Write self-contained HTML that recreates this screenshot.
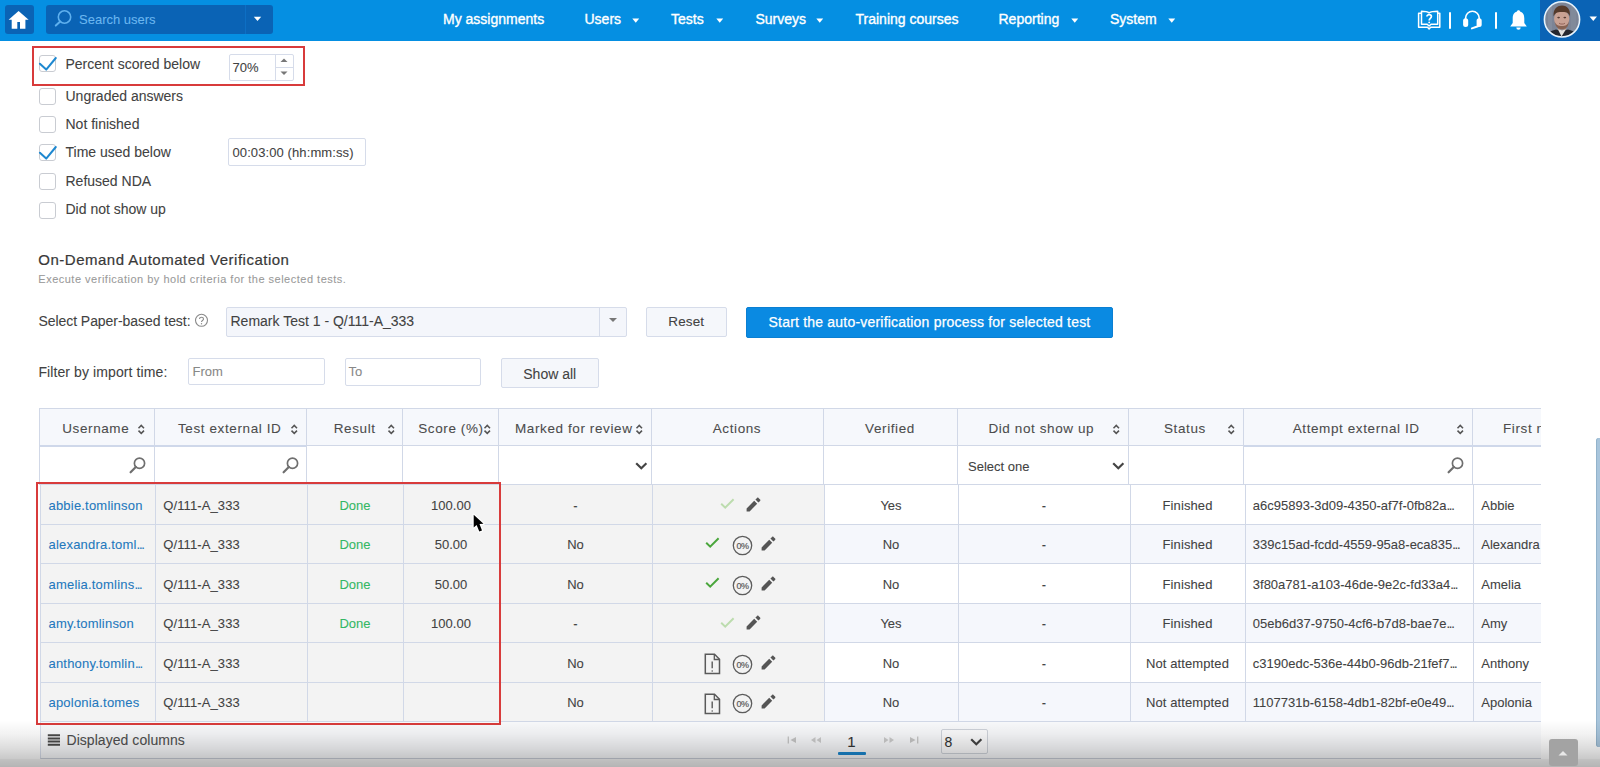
<!DOCTYPE html>
<html><head><meta charset="utf-8"><title>Remark verification</title>
<style>
*{box-sizing:border-box;margin:0;padding:0}
html,body{width:1600px;height:767px;overflow:hidden;background:#fff;font-family:"Liberation Sans",sans-serif;color:#3a3a3a}
.a{position:absolute}
.t{position:absolute;white-space:nowrap;line-height:1;-webkit-text-stroke:0.08px currentColor}
</style></head><body>
<div class="a" style="left:0px;top:0px;width:1600px;height:41px;background:#058fe2;"></div><div class="a" style="left:5px;top:5px;width:29px;height:29px;background:#0a63b5;border-radius:3px;"></div><svg class="a" style="left:5px;top:5px;" width="29" height="29" viewBox="0 0 29 29"><path d="M3.6 14.8 L13.6 5.9 L23.6 14.8 Z" fill="#fff"/><path d="M6.7 14 H20.4 V23.7 H15 V17 H12.3 V23.7 H6.7 Z" fill="#fff"/></svg><div class="a" style="left:46px;top:5px;width:227px;height:29px;background:#0a63b5;border-radius:3px;"></div><div class="a" style="left:245px;top:5px;width:1px;height:29px;background:#0d6fc4;"></div><svg class="a" style="left:52px;top:8px;" width="22" height="22" viewBox="0 0 22 22"><circle cx="12.5" cy="9" r="6.2" fill="none" stroke="#5fb0ee" stroke-width="1.6"/><path d="M8.2 13.5 L3.8 17.6" stroke="#5fb0ee" stroke-width="2" stroke-linecap="round"/></svg><div class="t" style="left:79px;top:13.00px;font-size:13px;color:#6bb7f0;">Search users</div><svg class="a" style="left:253px;top:16px;" width="9" height="6" viewBox="0 0 9 6"><path d="M0.8 0.8 H8.2 L4.5 4.9 Z" fill="#fff"/></svg><div class="t" style="left:443px;top:12.45px;font-size:14px;color:#fff;-webkit-text-stroke:0.35px #fff;">My assignments</div><div class="t" style="left:584.5px;top:12.45px;font-size:14px;color:#fff;-webkit-text-stroke:0.35px #fff;">Users</div><svg class="a" style="left:632px;top:18px;" width="8" height="6" viewBox="0 0 8 6"><path d="M0.3 0.6 H7.2 L3.75 4.8 Z" fill="#fff"/></svg><div class="t" style="left:671px;top:12.45px;font-size:14px;color:#fff;-webkit-text-stroke:0.35px #fff;">Tests</div><svg class="a" style="left:716.2px;top:18px;" width="8" height="6" viewBox="0 0 8 6"><path d="M0.3 0.6 H7.2 L3.75 4.8 Z" fill="#fff"/></svg><div class="t" style="left:755.5px;top:12.45px;font-size:14px;color:#fff;-webkit-text-stroke:0.35px #fff;">Surveys</div><svg class="a" style="left:816.2px;top:18px;" width="8" height="6" viewBox="0 0 8 6"><path d="M0.3 0.6 H7.2 L3.75 4.8 Z" fill="#fff"/></svg><div class="t" style="left:855.5px;top:12.45px;font-size:14px;color:#fff;-webkit-text-stroke:0.35px #fff;">Training courses</div><div class="t" style="left:998.5px;top:12.45px;font-size:14px;color:#fff;-webkit-text-stroke:0.35px #fff;">Reporting</div><svg class="a" style="left:1071.2px;top:18px;" width="8" height="6" viewBox="0 0 8 6"><path d="M0.3 0.6 H7.2 L3.75 4.8 Z" fill="#fff"/></svg><div class="t" style="left:1110px;top:12.45px;font-size:14px;color:#fff;-webkit-text-stroke:0.35px #fff;">System</div><svg class="a" style="left:1168px;top:18px;" width="8" height="6" viewBox="0 0 8 6"><path d="M0.3 0.6 H7.2 L3.75 4.8 Z" fill="#fff"/></svg><svg class="a" style="left:1417px;top:9px;" width="25" height="23" viewBox="0 0 25 23"><g fill="none" stroke="#fff" stroke-width="1.5" stroke-linejoin="round">
<path d="M4.3 4.3 H1.6 V18.3 H10.6 L12.1 20 L13.6 18.3 H22.8 V4.3 H20.7"/>
<path d="M4.5 15.3 V2.2 C7.5 2.2 10.5 2.6 12.1 3.8 C13.7 2.6 16.7 2.2 20.7 2.2 V15.3 H14 L12.1 17 L10.2 15.3 Z"/>
</g>
<path d="M9.9 7.6 C9.9 4.9 14.4 4.9 14.4 7.6 C14.4 9.4 12.2 9.6 12.2 11.5" fill="none" stroke="#fff" stroke-width="1.7"/><circle cx="12.2" cy="13.4" r="0.95" fill="#fff"/></svg><div class="a" style="left:1449px;top:12px;width:2px;height:17px;background:#fff;border-radius:1px;"></div><svg class="a" style="left:1461px;top:9px;" width="22" height="22" viewBox="0 0 22 22"><path d="M4.6 11 V9 A6.8 6.8 0 0 1 18.2 9 V11" fill="none" stroke="#fff" stroke-width="1.6"/>
<rect x="2.1" y="9.2" width="5.1" height="8.8" rx="2.5" fill="#fff"/><rect x="15.6" y="9.2" width="5.1" height="8.8" rx="2.5" fill="#fff"/>
<path d="M10.9 19.4 L17 17.3" fill="none" stroke="#fff" stroke-width="2" stroke-linecap="round"/></svg><div class="a" style="left:1495px;top:12px;width:2px;height:17px;background:#fff;border-radius:1px;"></div><svg class="a" style="left:1509px;top:9px;" width="19" height="22" viewBox="0 0 19 22"><path d="M9.5 1.2 C10.5 1.2 11 1.8 11 2.6 C14.2 3.4 15.3 6.2 15.3 9.5 V14 L17.8 17.6 H1.2 L3.7 14 V9.5 C3.7 6.2 4.8 3.4 8 2.6 C8 1.8 8.5 1.2 9.5 1.2 Z" fill="#fff"/><path d="M7.3 18.6 A2.2 2.2 0 0 0 11.7 18.6 Z" fill="#fff"/></svg><div class="a" style="left:1540px;top:0px;width:60px;height:41px;background:#0a63b5;"></div><svg class="a" style="left:1543px;top:0px;" width="39" height="39" viewBox="0 0 39 39"><defs><clipPath id="av"><circle cx="19" cy="19.4" r="17.3"/></clipPath></defs>
<g clip-path="url(#av)">
<rect x="0" y="0" width="39" height="39" fill="#7c8496"/>
<rect x="5" y="0" width="4" height="39" fill="#8a91a1" opacity="0.6"/><rect x="28" y="0" width="5" height="39" fill="#868d9c" opacity="0.6"/>
<path d="M3 39 C4 33 8 30.5 13 29.5 L19 31 L25 29.5 C30 30.5 34 33 36 39 Z" fill="#25272e"/>
<path d="M14.5 28.5 L18.5 36.5 L23.5 28.5 L19 30.5 Z" fill="#e4e0dc"/>
<rect x="15" y="23" width="8" height="6.5" fill="#a8806e"/>
<ellipse cx="18.7" cy="19" rx="7.6" ry="9" fill="#c9a193"/>
<path d="M10.6 16.5 C10 9.5 13.5 5.6 19 5.5 C24.5 5.6 27.7 9.5 26.8 16.5 C26 13 24 11.8 19 11.9 C14 11.8 11.8 13 10.6 16.5 Z" fill="#553a2b"/>
<path d="M11.5 21 C12.5 27.5 15.5 29 19 29 C22.5 29 25.5 27.5 26 21 C25 25 22.5 26 19 26 C15.5 26 12.5 25 11.5 21Z" fill="#876252"/>
<ellipse cx="15.6" cy="17.6" rx="1.4" ry="0.8" fill="#5a3e35"/><ellipse cx="21.8" cy="17.6" rx="1.4" ry="0.8" fill="#5a3e35"/>
<path d="M16 23.2 C17.5 24.4 20.5 24.4 22 23.2" fill="none" stroke="#8e5f55" stroke-width="0.9"/>
</g>
<circle cx="19" cy="19.4" r="17.6" fill="none" stroke="#e8f3fc" stroke-width="1.6"/></svg><svg class="a" style="left:1589px;top:16px;" width="9" height="6" viewBox="0 0 9 6"><path d="M0.5 0.5 H8 L4.25 4.9 Z" fill="#fff"/></svg><div class="a" style="left:32px;top:46px;width:273px;height:39.5px;border:2px solid #d83b3b;"></div><div class="a" style="left:39px;top:55px;width:17px;height:17px;border:1px solid #c9ccd2;border-radius:3px;background:#fff;"></div><svg class="a" style="left:38px;top:52px;" width="22" height="20" viewBox="0 0 22 20"><path d="M1.9 11.8 L8.2 17.6 L17.8 6" fill="none" stroke="#1e88d0" stroke-width="2" stroke-linecap="round" stroke-linejoin="round"/></svg><div class="t" style="left:65.5px;top:56.65px;font-size:14px;color:#424242;">Percent scored below</div><div class="a" style="left:39px;top:88px;width:17px;height:17px;border:1px solid #c9ccd2;border-radius:3px;background:#fff;"></div><div class="t" style="left:65.5px;top:88.95px;font-size:14px;color:#424242;">Ungraded answers</div><div class="a" style="left:39px;top:116px;width:17px;height:17px;border:1px solid #c9ccd2;border-radius:3px;background:#fff;"></div><div class="t" style="left:65.5px;top:116.75px;font-size:14px;color:#424242;">Not finished</div><div class="a" style="left:39px;top:144px;width:17px;height:17px;border:1px solid #c9ccd2;border-radius:3px;background:#fff;"></div><svg class="a" style="left:38px;top:141px;" width="22" height="20" viewBox="0 0 22 20"><path d="M1.9 11.8 L8.2 17.6 L17.8 6" fill="none" stroke="#1e88d0" stroke-width="2" stroke-linecap="round" stroke-linejoin="round"/></svg><div class="t" style="left:65.5px;top:144.75px;font-size:14px;color:#424242;">Time used below</div><div class="a" style="left:39px;top:173px;width:17px;height:17px;border:1px solid #c9ccd2;border-radius:3px;background:#fff;"></div><div class="t" style="left:65.5px;top:174.25px;font-size:14px;color:#424242;">Refused NDA</div><div class="a" style="left:39px;top:201.5px;width:17px;height:17px;border:1px solid #c9ccd2;border-radius:3px;background:#fff;"></div><div class="t" style="left:65.5px;top:202.05px;font-size:14px;color:#424242;">Did not show up</div><div class="a" style="left:228.5px;top:53.5px;width:65px;height:27.5px;border:1px solid #d6dcea;border-radius:2px;background:#fff;"></div><div class="a" style="left:274.5px;top:54.5px;width:1px;height:25.5px;background:#d6dcea;"></div><div class="a" style="left:275.5px;top:67px;width:17px;height:1px;background:#d6dcea;"></div><svg class="a" style="left:279px;top:57px;" width="10" height="7" viewBox="0 0 10 7"><path d="M1.5 5 L5 1.5 L8.5 5 Z" fill="#777"/></svg><svg class="a" style="left:279px;top:70px;" width="10" height="7" viewBox="0 0 10 7"><path d="M1.5 1.5 L5 5 L8.5 1.5 Z" fill="#777"/></svg><div class="t" style="left:232.5px;top:61.30px;font-size:13px;color:#424242;">70%</div><div class="a" style="left:228px;top:137.5px;width:137.5px;height:28.5px;border:1px solid #d6dcea;border-radius:2px;background:#fff;"></div><div class="t" style="left:232.5px;top:145.60px;font-size:13px;color:#424242;letter-spacing:0.1px;">00:03:00 (hh:mm:ss)</div><div class="t" style="left:38.3px;top:252.05px;font-size:15px;color:#383838;letter-spacing:0.5px;-webkit-text-stroke:0.2px #383838;">On-Demand Automated Verification</div><div class="t" style="left:38.3px;top:274.39px;font-size:11px;color:#9a9a9a;letter-spacing:0.5px;">Execute verification by hold criteria for the selected tests.</div><div class="t" style="left:38.4px;top:313.55px;font-size:14px;color:#424242;letter-spacing:-0.05px;">Select Paper-based test:</div><svg class="a" style="left:194px;top:312.5px;" width="15" height="15" viewBox="0 0 15 15"><circle cx="7.5" cy="7.3" r="6" fill="none" stroke="#8a8a8a" stroke-width="1.1"/><path d="M5.5 5.9 C5.5 3.7 9.5 3.7 9.5 5.9 C9.5 7.4 7.5 7.5 7.5 9" fill="none" stroke="#8a8a8a" stroke-width="1.1"/><circle cx="7.5" cy="10.8" r="0.7" fill="#8a8a8a"/></svg><div class="a" style="left:226px;top:306.5px;width:400.5px;height:30.5px;border:1px solid #d6dcea;border-radius:2px;background:#f4f6fb;"></div><div class="a" style="left:599px;top:307.5px;width:1px;height:28.5px;background:#d6dcea;"></div><svg class="a" style="left:608px;top:317px;" width="10" height="7" viewBox="0 0 10 7"><path d="M1 1 H9 L5 5 Z" fill="#777"/></svg><div class="t" style="left:230.5px;top:313.55px;font-size:14px;color:#424242;">Remark Test 1 - Q/111-A_333</div><div class="a" style="left:646px;top:306.5px;width:80.5px;height:30.5px;border:1px solid #d6dcea;border-radius:2px;background:#f5f7fb;"></div><div class="t" style="left:646px;top:315.07px;font-size:13.5px;color:#424242;letter-spacing:0.1px;width:80.5px;text-align:center;">Reset</div><div class="a" style="left:746px;top:306.5px;width:367px;height:31px;background:#0a8ae2;border-radius:2px;border:1px solid #0a7fd2;"></div><div class="t" style="left:746px;top:315.25px;font-size:14px;color:#fff;letter-spacing:0.2px;width:367px;text-align:center;-webkit-text-stroke:0.25px #fff;">Start the auto-verification process for selected test</div><div class="t" style="left:38.4px;top:364.75px;font-size:14px;color:#424242;letter-spacing:0.1px;">Filter by import time:</div><div class="a" style="left:188px;top:357.8px;width:136.5px;height:27.6px;border:1px solid #d6dcea;border-radius:2px;background:#fff;"></div><div class="t" style="left:192.5px;top:365.20px;font-size:13px;color:#888;">From</div><div class="a" style="left:344.5px;top:357.6px;width:136.7px;height:28.2px;border:1px solid #d6dcea;border-radius:2px;background:#fff;"></div><div class="t" style="left:348.5px;top:365.30px;font-size:13px;color:#888;">To</div><div class="a" style="left:501px;top:357.5px;width:97.5px;height:30.5px;border:1px solid #d6dcea;border-radius:2px;background:#f5f7fb;"></div><div class="t" style="left:501px;top:367.15px;font-size:14px;color:#424242;width:97.5px;text-align:center;">Show all</div><div class="a" style="left:39px;top:408px;width:1502px;height:38px;background:#f6f8fc;border-top:1px solid #d1d8e7;border-bottom:1px solid #d1d8e7;"></div><div class="a" style="left:39px;top:446px;width:1502px;height:39px;background:#fff;"></div><div class="a" style="left:39px;top:408px;width:1px;height:77px;background:#d1d8e7;"></div><div class="a" style="left:154px;top:408px;width:1px;height:77px;background:#d1d8e7;"></div><div class="a" style="left:306px;top:408px;width:1px;height:77px;background:#d1d8e7;"></div><div class="a" style="left:402px;top:408px;width:1px;height:77px;background:#d1d8e7;"></div><div class="a" style="left:498px;top:408px;width:1px;height:77px;background:#d1d8e7;"></div><div class="a" style="left:651px;top:408px;width:1px;height:77px;background:#d1d8e7;"></div><div class="a" style="left:823px;top:408px;width:1px;height:77px;background:#d1d8e7;"></div><div class="a" style="left:957px;top:408px;width:1px;height:77px;background:#d1d8e7;"></div><div class="a" style="left:1128px;top:408px;width:1px;height:77px;background:#d1d8e7;"></div><div class="a" style="left:1243px;top:408px;width:1px;height:77px;background:#d1d8e7;"></div><div class="a" style="left:1472px;top:408px;width:1px;height:77px;background:#d1d8e7;"></div><div class="a" style="left:40px;top:445px;width:266px;height:2px;background:#cfd8ea;"></div><div class="a" style="left:1244px;top:445px;width:297px;height:2px;background:#cfd8ea;"></div><div class="a" style="left:40px;top:484.5px;width:784px;height:39.5px;background:#f3f3f3;"></div><div class="a" style="left:824px;top:484.5px;width:717px;height:39.5px;background:#fff;"></div><div class="a" style="left:40px;top:524px;width:784px;height:39.5px;background:#f3f3f3;"></div><div class="a" style="left:824px;top:524px;width:717px;height:39.5px;background:#f5f7fc;"></div><div class="a" style="left:40px;top:563.5px;width:784px;height:39.5px;background:#f3f3f3;"></div><div class="a" style="left:824px;top:563.5px;width:717px;height:39.5px;background:#fff;"></div><div class="a" style="left:40px;top:603px;width:784px;height:39.5px;background:#f3f3f3;"></div><div class="a" style="left:824px;top:603px;width:717px;height:39.5px;background:#f5f7fc;"></div><div class="a" style="left:40px;top:642.5px;width:784px;height:39.5px;background:#f3f3f3;"></div><div class="a" style="left:824px;top:642.5px;width:717px;height:39.5px;background:#fff;"></div><div class="a" style="left:40px;top:682px;width:784px;height:39.5px;background:#f3f3f3;"></div><div class="a" style="left:824px;top:682px;width:717px;height:39.5px;background:#f5f7fc;"></div><div class="a" style="left:39px;top:484px;width:1502px;height:1px;background:#d1d8e7;"></div><div class="a" style="left:40px;top:524px;width:1501px;height:1px;background:#d1d8e7;"></div><div class="a" style="left:40px;top:563px;width:1501px;height:1px;background:#d1d8e7;"></div><div class="a" style="left:40px;top:603px;width:1501px;height:1px;background:#d1d8e7;"></div><div class="a" style="left:40px;top:642px;width:1501px;height:1px;background:#d1d8e7;"></div><div class="a" style="left:40px;top:682px;width:1501px;height:1px;background:#d1d8e7;"></div><div class="a" style="left:40px;top:721px;width:1501px;height:1px;background:#d1d8e7;"></div><div class="a" style="left:40px;top:485px;width:1px;height:237px;background:#d1d8e7;"></div><div class="a" style="left:155px;top:485px;width:1px;height:237px;background:#d1d8e7;"></div><div class="a" style="left:307px;top:485px;width:1px;height:237px;background:#d1d8e7;"></div><div class="a" style="left:403px;top:485px;width:1px;height:237px;background:#d1d8e7;"></div><div class="a" style="left:499px;top:485px;width:1px;height:237px;background:#d1d8e7;"></div><div class="a" style="left:652px;top:485px;width:1px;height:237px;background:#d1d8e7;"></div><div class="a" style="left:824px;top:485px;width:1px;height:237px;background:#d1d8e7;"></div><div class="a" style="left:958px;top:485px;width:1px;height:237px;background:#d1d8e7;"></div><div class="a" style="left:1130px;top:485px;width:1px;height:237px;background:#d1d8e7;"></div><div class="a" style="left:1245px;top:485px;width:1px;height:237px;background:#d1d8e7;"></div><div class="a" style="left:1473px;top:485px;width:1px;height:237px;background:#d1d8e7;"></div><div class="t" style="left:62.25px;top:422.32px;font-size:13.5px;color:#4c4c4c;letter-spacing:0.6px;">Username</div><svg class="a" style="left:137.3px;top:423.5px;" width="9" height="11" viewBox="0 0 9 11"><path d="M1.5 4.2 L4.25 1.4 L7 4.2 M1.5 6.6 L4.25 9.4 L7 6.6" fill="none" stroke="#555" stroke-width="1.5"/></svg><div class="t" style="left:178px;top:422.32px;font-size:13.5px;color:#4c4c4c;letter-spacing:0.6px;">Test external ID</div><svg class="a" style="left:290.1px;top:423.5px;" width="9" height="11" viewBox="0 0 9 11"><path d="M1.5 4.2 L4.25 1.4 L7 4.2 M1.5 6.6 L4.25 9.4 L7 6.6" fill="none" stroke="#555" stroke-width="1.5"/></svg><div class="t" style="left:333.75px;top:422.32px;font-size:13.5px;color:#4c4c4c;letter-spacing:0.6px;">Result</div><svg class="a" style="left:387.0px;top:423.5px;" width="9" height="11" viewBox="0 0 9 11"><path d="M1.5 4.2 L4.25 1.4 L7 4.2 M1.5 6.6 L4.25 9.4 L7 6.6" fill="none" stroke="#555" stroke-width="1.5"/></svg><div class="t" style="left:418.25px;top:422.32px;font-size:13.5px;color:#4c4c4c;letter-spacing:0.6px;">Score (%)</div><svg class="a" style="left:482.5px;top:423.5px;" width="9" height="11" viewBox="0 0 9 11"><path d="M1.5 4.2 L4.25 1.4 L7 4.2 M1.5 6.6 L4.25 9.4 L7 6.6" fill="none" stroke="#555" stroke-width="1.5"/></svg><div class="t" style="left:515px;top:422.32px;font-size:13.5px;color:#4c4c4c;letter-spacing:0.6px;">Marked for review</div><svg class="a" style="left:635.25px;top:423.5px;" width="9" height="11" viewBox="0 0 9 11"><path d="M1.5 4.2 L4.25 1.4 L7 4.2 M1.5 6.6 L4.25 9.4 L7 6.6" fill="none" stroke="#555" stroke-width="1.5"/></svg><div class="t" style="left:988.4px;top:422.32px;font-size:13.5px;color:#4c4c4c;letter-spacing:0.6px;">Did not show up</div><svg class="a" style="left:1112.0px;top:423.5px;" width="9" height="11" viewBox="0 0 9 11"><path d="M1.5 4.2 L4.25 1.4 L7 4.2 M1.5 6.6 L4.25 9.4 L7 6.6" fill="none" stroke="#555" stroke-width="1.5"/></svg><div class="t" style="left:1164px;top:422.32px;font-size:13.5px;color:#4c4c4c;letter-spacing:0.6px;">Status</div><svg class="a" style="left:1227.3px;top:423.5px;" width="9" height="11" viewBox="0 0 9 11"><path d="M1.5 4.2 L4.25 1.4 L7 4.2 M1.5 6.6 L4.25 9.4 L7 6.6" fill="none" stroke="#555" stroke-width="1.5"/></svg><div class="t" style="left:1292.7px;top:422.32px;font-size:13.5px;color:#4c4c4c;letter-spacing:0.6px;">Attempt external ID</div><svg class="a" style="left:1455.5px;top:423.5px;" width="9" height="11" viewBox="0 0 9 11"><path d="M1.5 4.2 L4.25 1.4 L7 4.2 M1.5 6.6 L4.25 9.4 L7 6.6" fill="none" stroke="#555" stroke-width="1.5"/></svg><div class="t" style="left:651px;top:422.32px;font-size:13.5px;color:#4c4c4c;letter-spacing:0.6px;width:172px;text-align:center;">Actions</div><div class="t" style="left:823px;top:422.32px;font-size:13.5px;color:#4c4c4c;letter-spacing:0.6px;width:134px;text-align:center;">Verified</div><div class="a" style="left:1473px;top:409px;width:68px;height:36px;overflow:hidden"><div class="t" style="left:30px;top:13.32px;font-size:13.5px;color:#4c4c4c;letter-spacing:0.6px;">First name</div></div><svg class="a" style="left:128.5px;top:456.5px;" width="17" height="17" viewBox="0 0 17 17"><circle cx="10.5" cy="6.3" r="5.1" fill="none" stroke="#6f6f6f" stroke-width="1.7"/><path d="M6.8 10 L1.6 15.3" stroke="#6f6f6f" stroke-width="2.2" stroke-linecap="round"/></svg><svg class="a" style="left:281.5px;top:456.5px;" width="17" height="17" viewBox="0 0 17 17"><circle cx="10.5" cy="6.3" r="5.1" fill="none" stroke="#6f6f6f" stroke-width="1.7"/><path d="M6.8 10 L1.6 15.3" stroke="#6f6f6f" stroke-width="2.2" stroke-linecap="round"/></svg><svg class="a" style="left:1447px;top:456.5px;" width="17" height="17" viewBox="0 0 17 17"><circle cx="10.5" cy="6.3" r="5.1" fill="none" stroke="#6f6f6f" stroke-width="1.7"/><path d="M6.8 10 L1.6 15.3" stroke="#6f6f6f" stroke-width="2.2" stroke-linecap="round"/></svg><svg class="a" style="left:634.5px;top:462px;" width="13" height="8" viewBox="0 0 13 8"><path d="M1.2 1.2 L6.3 6.2 L11.4 1.2" fill="none" stroke="#444" stroke-width="2.2"/></svg><svg class="a" style="left:1112px;top:462px;" width="13" height="8" viewBox="0 0 13 8"><path d="M1.2 1.2 L6.3 6.2 L11.4 1.2" fill="none" stroke="#444" stroke-width="2.2"/></svg><div class="t" style="left:968px;top:459.60px;font-size:13px;color:#424242;">Select one</div><div class="t" style="left:48.5px;top:498.50px;font-size:13px;color:#2378bd;letter-spacing:0.2px;">abbie.tomlinson</div><div class="t" style="left:163.3px;top:498.50px;font-size:13px;color:#424242;letter-spacing:0.1px;">Q/111-A_333</div><div class="t" style="left:307px;top:498.50px;font-size:13px;color:#34b763;width:96px;text-align:center;">Done</div><div class="t" style="left:403px;top:498.50px;font-size:13px;color:#424242;width:96px;text-align:center;">100.00</div><div class="t" style="left:499px;top:498.50px;font-size:13px;color:#424242;width:153px;text-align:center;">-</div><svg class="a" style="left:719.5px;top:498.0px;" width="15" height="12" viewBox="0 0 15 12"><path d="M1.2 5.8 L5.2 9.6 L13.6 1.2" fill="none" stroke="#bcdcae" stroke-width="2"/></svg><svg class="a" style="left:745.5px;top:496.8px;" width="15" height="15" viewBox="0 0 15 15"><path d="M0.6 11.4 V14.4 H3.6 L11.2 6.8 L8.2 3.8 Z M12.4 5.6 L14.1 3.9 C14.5 3.5 14.5 2.9 14.1 2.5 L12.5 0.9 C12.1 0.5 11.5 0.5 11.1 0.9 L9.4 2.6 Z" fill="#555" transform="translate(0,0)"/></svg><div class="t" style="left:824px;top:498.50px;font-size:13px;color:#424242;width:134px;text-align:center;">Yes</div><div class="t" style="left:958px;top:498.50px;font-size:13px;color:#424242;width:172px;text-align:center;">-</div><div class="t" style="left:1130px;top:498.50px;font-size:13px;color:#424242;letter-spacing:0.1px;width:115px;text-align:center;">Finished</div><div class="t" style="left:1252.8px;top:498.50px;font-size:13px;color:#424242;">a6c95893-3d09-4350-af7f-0fb82a<span style="letter-spacing:-1.3px">...</span></div><div class="a" style="left:1474px;top:484.5px;width:67px;height:39px;overflow:hidden"><div class="t" style="left:7.3px;top:14.00px;font-size:13px;color:#424242;">Abbie</div></div><div class="t" style="left:48.5px;top:538.00px;font-size:13px;color:#2378bd;letter-spacing:0.2px;">alexandra.toml<span style="letter-spacing:-1.3px">...</span></div><div class="t" style="left:163.3px;top:538.00px;font-size:13px;color:#424242;letter-spacing:0.1px;">Q/111-A_333</div><div class="t" style="left:307px;top:538.00px;font-size:13px;color:#34b763;width:96px;text-align:center;">Done</div><div class="t" style="left:403px;top:538.00px;font-size:13px;color:#424242;width:96px;text-align:center;">50.00</div><div class="t" style="left:499px;top:538.00px;font-size:13px;color:#424242;width:153px;text-align:center;">No</div><svg class="a" style="left:705px;top:537px;" width="15" height="12" viewBox="0 0 15 12"><path d="M1.2 5.8 L5.2 9.6 L13.6 1.2" fill="none" stroke="#4aa63c" stroke-width="2"/></svg><svg class="a" style="left:731.7px;top:535px;" width="21" height="21" viewBox="0 0 21 21"><circle cx="10.5" cy="10.5" r="9.2" fill="none" stroke="#5c5c5c" stroke-width="1.3"/><text x="10.6" y="13.6" font-family="Liberation Sans" font-size="9" text-anchor="middle" fill="#5a5a5a" stroke="#5a5a5a" stroke-width="0.2" letter-spacing="-0.35">0%</text></svg><svg class="a" style="left:760.6px;top:536px;" width="15" height="15" viewBox="0 0 15 15"><path d="M0.6 11.4 V14.4 H3.6 L11.2 6.8 L8.2 3.8 Z M12.4 5.6 L14.1 3.9 C14.5 3.5 14.5 2.9 14.1 2.5 L12.5 0.9 C12.1 0.5 11.5 0.5 11.1 0.9 L9.4 2.6 Z" fill="#555" transform="translate(0,0)"/></svg><div class="t" style="left:824px;top:538.00px;font-size:13px;color:#424242;width:134px;text-align:center;">No</div><div class="t" style="left:958px;top:538.00px;font-size:13px;color:#424242;width:172px;text-align:center;">-</div><div class="t" style="left:1130px;top:538.00px;font-size:13px;color:#424242;letter-spacing:0.1px;width:115px;text-align:center;">Finished</div><div class="t" style="left:1252.8px;top:538.00px;font-size:13px;color:#424242;">339c15ad-fcdd-4559-95a8-eca835<span style="letter-spacing:-1.3px">...</span></div><div class="a" style="left:1474px;top:524px;width:67px;height:39px;overflow:hidden"><div class="t" style="left:7.3px;top:14.00px;font-size:13px;color:#424242;">Alexandra</div></div><div class="t" style="left:48.5px;top:577.50px;font-size:13px;color:#2378bd;letter-spacing:0.2px;">amelia.tomlins<span style="letter-spacing:-1.3px">...</span></div><div class="t" style="left:163.3px;top:577.50px;font-size:13px;color:#424242;letter-spacing:0.1px;">Q/111-A_333</div><div class="t" style="left:307px;top:577.50px;font-size:13px;color:#34b763;width:96px;text-align:center;">Done</div><div class="t" style="left:403px;top:577.50px;font-size:13px;color:#424242;width:96px;text-align:center;">50.00</div><div class="t" style="left:499px;top:577.50px;font-size:13px;color:#424242;width:153px;text-align:center;">No</div><svg class="a" style="left:705px;top:576.5px;" width="15" height="12" viewBox="0 0 15 12"><path d="M1.2 5.8 L5.2 9.6 L13.6 1.2" fill="none" stroke="#4aa63c" stroke-width="2"/></svg><svg class="a" style="left:731.7px;top:574.5px;" width="21" height="21" viewBox="0 0 21 21"><circle cx="10.5" cy="10.5" r="9.2" fill="none" stroke="#5c5c5c" stroke-width="1.3"/><text x="10.6" y="13.6" font-family="Liberation Sans" font-size="9" text-anchor="middle" fill="#5a5a5a" stroke="#5a5a5a" stroke-width="0.2" letter-spacing="-0.35">0%</text></svg><svg class="a" style="left:760.6px;top:575.5px;" width="15" height="15" viewBox="0 0 15 15"><path d="M0.6 11.4 V14.4 H3.6 L11.2 6.8 L8.2 3.8 Z M12.4 5.6 L14.1 3.9 C14.5 3.5 14.5 2.9 14.1 2.5 L12.5 0.9 C12.1 0.5 11.5 0.5 11.1 0.9 L9.4 2.6 Z" fill="#555" transform="translate(0,0)"/></svg><div class="t" style="left:824px;top:577.50px;font-size:13px;color:#424242;width:134px;text-align:center;">No</div><div class="t" style="left:958px;top:577.50px;font-size:13px;color:#424242;width:172px;text-align:center;">-</div><div class="t" style="left:1130px;top:577.50px;font-size:13px;color:#424242;letter-spacing:0.1px;width:115px;text-align:center;">Finished</div><div class="t" style="left:1252.8px;top:577.50px;font-size:13px;color:#424242;">3f80a781-a103-46de-9e2c-fd33a4<span style="letter-spacing:-1.3px">...</span></div><div class="a" style="left:1474px;top:563.5px;width:67px;height:39px;overflow:hidden"><div class="t" style="left:7.3px;top:14.00px;font-size:13px;color:#424242;">Amelia</div></div><div class="t" style="left:48.5px;top:617.00px;font-size:13px;color:#2378bd;letter-spacing:0.2px;">amy.tomlinson</div><div class="t" style="left:163.3px;top:617.00px;font-size:13px;color:#424242;letter-spacing:0.1px;">Q/111-A_333</div><div class="t" style="left:307px;top:617.00px;font-size:13px;color:#34b763;width:96px;text-align:center;">Done</div><div class="t" style="left:403px;top:617.00px;font-size:13px;color:#424242;width:96px;text-align:center;">100.00</div><div class="t" style="left:499px;top:617.00px;font-size:13px;color:#424242;width:153px;text-align:center;">-</div><svg class="a" style="left:719.5px;top:616.5px;" width="15" height="12" viewBox="0 0 15 12"><path d="M1.2 5.8 L5.2 9.6 L13.6 1.2" fill="none" stroke="#bcdcae" stroke-width="2"/></svg><svg class="a" style="left:745.5px;top:615.3px;" width="15" height="15" viewBox="0 0 15 15"><path d="M0.6 11.4 V14.4 H3.6 L11.2 6.8 L8.2 3.8 Z M12.4 5.6 L14.1 3.9 C14.5 3.5 14.5 2.9 14.1 2.5 L12.5 0.9 C12.1 0.5 11.5 0.5 11.1 0.9 L9.4 2.6 Z" fill="#555" transform="translate(0,0)"/></svg><div class="t" style="left:824px;top:617.00px;font-size:13px;color:#424242;width:134px;text-align:center;">Yes</div><div class="t" style="left:958px;top:617.00px;font-size:13px;color:#424242;width:172px;text-align:center;">-</div><div class="t" style="left:1130px;top:617.00px;font-size:13px;color:#424242;letter-spacing:0.1px;width:115px;text-align:center;">Finished</div><div class="t" style="left:1252.8px;top:617.00px;font-size:13px;color:#424242;">05eb6d37-9750-4cf6-b7d8-bae7e<span style="letter-spacing:-1.3px">...</span></div><div class="a" style="left:1474px;top:603px;width:67px;height:39px;overflow:hidden"><div class="t" style="left:7.3px;top:14.00px;font-size:13px;color:#424242;">Amy</div></div><div class="t" style="left:48.5px;top:656.50px;font-size:13px;color:#2378bd;letter-spacing:0.2px;">anthony.tomlin<span style="letter-spacing:-1.3px">...</span></div><div class="t" style="left:163.3px;top:656.50px;font-size:13px;color:#424242;letter-spacing:0.1px;">Q/111-A_333</div><div class="t" style="left:499px;top:656.50px;font-size:13px;color:#424242;width:153px;text-align:center;">No</div><svg class="a" style="left:703.5px;top:653.1px;" width="17" height="22" viewBox="0 0 17 22"><path d="M1.3 1.3 H10.5 L15.5 6.3 V20.5 H1.3 Z" fill="none" stroke="#5a5a5a" stroke-width="1.5"/><path d="M10.3 1.3 V6.5 H15.5" fill="none" stroke="#5a5a5a" stroke-width="1.3"/><path d="M8.2 8.5 V15.2" stroke="#5a5a5a" stroke-width="1.4"/><circle cx="8.2" cy="18" r="0.8" fill="#5a5a5a"/></svg><svg class="a" style="left:731.7px;top:653.5px;" width="21" height="21" viewBox="0 0 21 21"><circle cx="10.5" cy="10.5" r="9.2" fill="none" stroke="#5c5c5c" stroke-width="1.3"/><text x="10.6" y="13.6" font-family="Liberation Sans" font-size="9" text-anchor="middle" fill="#5a5a5a" stroke="#5a5a5a" stroke-width="0.2" letter-spacing="-0.35">0%</text></svg><svg class="a" style="left:760.6px;top:654.5px;" width="15" height="15" viewBox="0 0 15 15"><path d="M0.6 11.4 V14.4 H3.6 L11.2 6.8 L8.2 3.8 Z M12.4 5.6 L14.1 3.9 C14.5 3.5 14.5 2.9 14.1 2.5 L12.5 0.9 C12.1 0.5 11.5 0.5 11.1 0.9 L9.4 2.6 Z" fill="#555" transform="translate(0,0)"/></svg><div class="t" style="left:824px;top:656.50px;font-size:13px;color:#424242;width:134px;text-align:center;">No</div><div class="t" style="left:958px;top:656.50px;font-size:13px;color:#424242;width:172px;text-align:center;">-</div><div class="t" style="left:1130px;top:656.50px;font-size:13px;color:#424242;letter-spacing:0.1px;width:115px;text-align:center;">Not attempted</div><div class="t" style="left:1252.8px;top:656.50px;font-size:13px;color:#424242;">c3190edc-536e-44b0-96db-21fef7<span style="letter-spacing:-1.3px">...</span></div><div class="a" style="left:1474px;top:642.5px;width:67px;height:39px;overflow:hidden"><div class="t" style="left:7.3px;top:14.00px;font-size:13px;color:#424242;">Anthony</div></div><div class="t" style="left:48.5px;top:696.00px;font-size:13px;color:#2378bd;letter-spacing:0.2px;">apolonia.tomes</div><div class="t" style="left:163.3px;top:696.00px;font-size:13px;color:#424242;letter-spacing:0.1px;">Q/111-A_333</div><div class="t" style="left:499px;top:696.00px;font-size:13px;color:#424242;width:153px;text-align:center;">No</div><svg class="a" style="left:703.5px;top:692.6px;" width="17" height="22" viewBox="0 0 17 22"><path d="M1.3 1.3 H10.5 L15.5 6.3 V20.5 H1.3 Z" fill="none" stroke="#5a5a5a" stroke-width="1.5"/><path d="M10.3 1.3 V6.5 H15.5" fill="none" stroke="#5a5a5a" stroke-width="1.3"/><path d="M8.2 8.5 V15.2" stroke="#5a5a5a" stroke-width="1.4"/><circle cx="8.2" cy="18" r="0.8" fill="#5a5a5a"/></svg><svg class="a" style="left:731.7px;top:693px;" width="21" height="21" viewBox="0 0 21 21"><circle cx="10.5" cy="10.5" r="9.2" fill="none" stroke="#5c5c5c" stroke-width="1.3"/><text x="10.6" y="13.6" font-family="Liberation Sans" font-size="9" text-anchor="middle" fill="#5a5a5a" stroke="#5a5a5a" stroke-width="0.2" letter-spacing="-0.35">0%</text></svg><svg class="a" style="left:760.6px;top:694px;" width="15" height="15" viewBox="0 0 15 15"><path d="M0.6 11.4 V14.4 H3.6 L11.2 6.8 L8.2 3.8 Z M12.4 5.6 L14.1 3.9 C14.5 3.5 14.5 2.9 14.1 2.5 L12.5 0.9 C12.1 0.5 11.5 0.5 11.1 0.9 L9.4 2.6 Z" fill="#555" transform="translate(0,0)"/></svg><div class="t" style="left:824px;top:696.00px;font-size:13px;color:#424242;width:134px;text-align:center;">No</div><div class="t" style="left:958px;top:696.00px;font-size:13px;color:#424242;width:172px;text-align:center;">-</div><div class="t" style="left:1130px;top:696.00px;font-size:13px;color:#424242;letter-spacing:0.1px;width:115px;text-align:center;">Not attempted</div><div class="t" style="left:1252.8px;top:696.00px;font-size:13px;color:#424242;">1107731b-6158-4db1-82bf-e0e49<span style="letter-spacing:-1.3px">...</span></div><div class="a" style="left:1474px;top:682px;width:67px;height:39px;overflow:hidden"><div class="t" style="left:7.3px;top:14.00px;font-size:13px;color:#424242;">Apolonia</div></div><svg class="a" style="left:470px;top:512px;" width="18" height="24" viewBox="0 0 18 24"><path d="M3.7 2.8 V15.6 L6.6 12.9 L9.3 19.6 L12 18.6 L9.5 12 L13.5 11.8 Z" fill="#000" stroke="#fff" stroke-width="2.4" stroke-linejoin="round" paint-order="stroke"/></svg><div class="a" style="left:40px;top:722px;width:1501px;height:37px;background:#f8f9fb;border-left:1px solid #d7ddea;border-bottom:1px solid #c9ced8;"></div><svg class="a" style="left:47px;top:734px;" width="14" height="13" viewBox="0 0 14 13"><path d="M0.8 1.2 H13 M0.8 4.4 H13 M0.8 7.6 H13 M0.8 10.8 H13" stroke="#4a4a4a" stroke-width="2"/></svg><div class="t" style="left:66.5px;top:733.15px;font-size:14px;color:#505050;letter-spacing:0.05px;">Displayed columns</div><svg class="a" style="left:786px;top:735px;" width="12" height="10" viewBox="0 0 12 10"><path d="M2.3 1.5 V8.5" stroke="#c6c6c6" stroke-width="1.3"/><path d="M10 2 L4.5 5 L10 8 Z" fill="#c6c6c6"/></svg><svg class="a" style="left:809px;top:735px;" width="14" height="10" viewBox="0 0 14 10"><path d="M6.5 2 L2 5 L6.5 8 Z M12 2 L7.5 5 L12 8 Z" fill="#cccccc"/></svg><div class="t" style="left:838px;top:733.90px;font-size:15px;color:#333;width:27px;text-align:center;">1</div><div class="a" style="left:837.5px;top:751.5px;width:28px;height:3px;background:#1a87cf;border-radius:1px;"></div><svg class="a" style="left:882px;top:735px;" width="14" height="10" viewBox="0 0 14 10"><path d="M2 2 L6.5 5 L2 8 Z M7.5 2 L12 5 L7.5 8 Z" fill="#cccccc"/></svg><svg class="a" style="left:908px;top:735px;" width="12" height="10" viewBox="0 0 12 10"><path d="M9.7 1.5 V8.5" stroke="#c6c6c6" stroke-width="1.3"/><path d="M2 2 L7.5 5 L2 8 Z" fill="#c6c6c6"/></svg><div class="a" style="left:940.5px;top:728.5px;width:47px;height:25px;border:1px solid #cfd3da;border-radius:2px;background:#fbfbfc;"></div><div class="t" style="left:944.5px;top:734.65px;font-size:14px;color:#333;">8</div><svg class="a" style="left:970px;top:737.5px;" width="13" height="8" viewBox="0 0 13 8"><path d="M1.2 1.2 L6.3 6.2 L11.4 1.2" fill="none" stroke="#444" stroke-width="2.2"/></svg><div class="a" style="left:36px;top:481.5px;width:465px;height:243px;border:2.5px solid #d83b3b;"></div><div class="a" style="left:1596.3px;top:437.5px;width:4px;height:309px;background:#a8c5dc;border-radius:3px 0 0 3px;box-shadow:inset 1px 0 0 #93b3cb;"></div><div class="a" style="left:0px;top:720px;width:1600px;height:47px;background:linear-gradient(to bottom, rgba(0,0,0,0) 0%, rgba(0,0,0,0.05) 30%, rgba(0,0,0,0.14) 62%, rgba(0,0,0,0.27) 100%);"></div><div class="a" style="left:0px;top:759px;width:1600px;height:8px;background:rgba(0,0,0,0.03);"></div><div class="a" style="left:1549px;top:739px;width:28.5px;height:27px;background:#a3a3a3;border-radius:3px;"></div><svg class="a" style="left:1557px;top:749px;" width="12" height="8" viewBox="0 0 12 8"><path d="M1.5 6.5 L6 2 L10.5 6.5 Z" fill="#e8e8e8"/></svg></body></html>
